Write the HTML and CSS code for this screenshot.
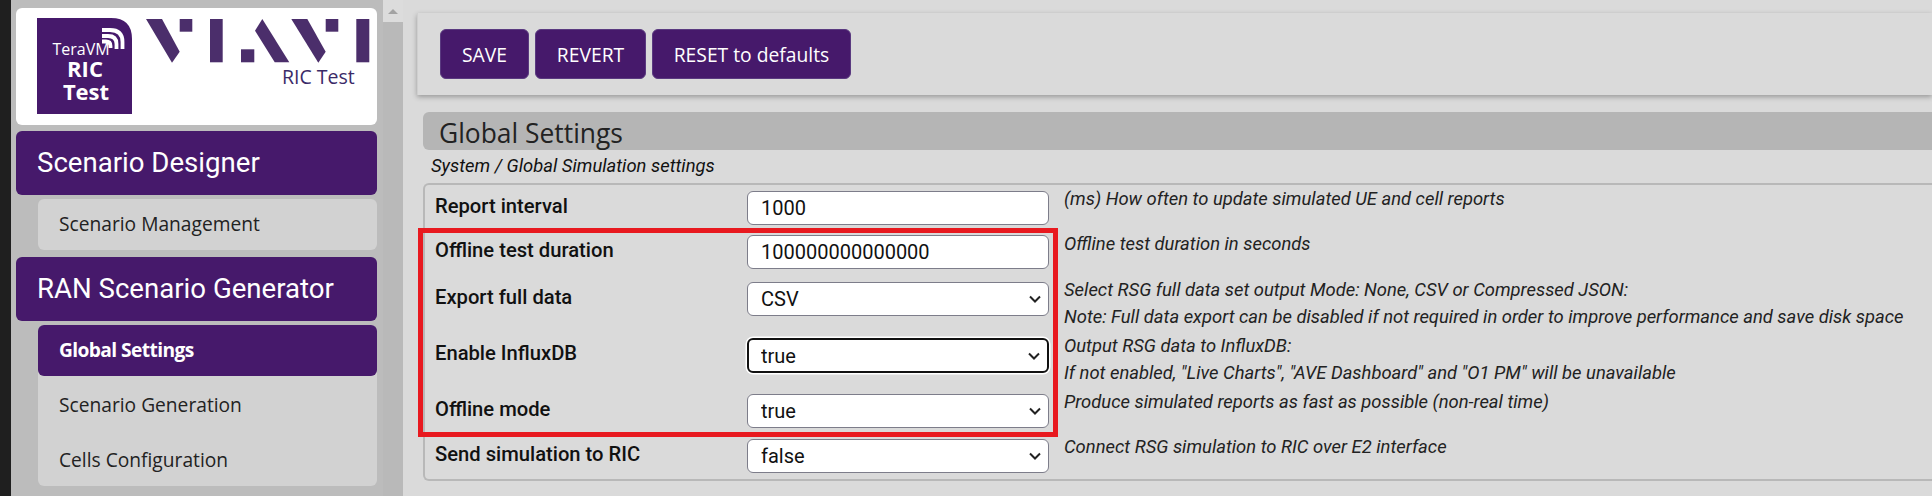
FILE: index.html
```html
<!DOCTYPE html>
<html lang="en">
<head>
  <meta charset="UTF-8">
  <title>Global Settings</title>
  <link rel="stylesheet" href="styles.css">
</head>
<body>

  <div class="edge"></div>

  <aside class="sidebar">
    <div class="logo-card">
      <svg class="logo" viewBox="0 0 361 117" width="361" height="117">
        <path class="logo-square" d="M21 10H95Q116 10 116 31V106H21Z"/>
        <text class="logo-tera" x="65" y="47" text-anchor="middle">TeraVM</text>
        <g class="logo-arcs">
          <path d="M86 22H94Q106.500 22 106.500 34V41"/>
          <path d="M86 28H92Q100.500 28 100.500 36V41"/>
          <path d="M86 33.500H90Q94.500 33.500 94.500 38V40"/>
        </g>
        <text class="logo-ric" x="69" y="69" text-anchor="middle">RIC</text>
        <text class="logo-ric" x="70" y="92" text-anchor="middle">Test</text>
        <g class="logo-viavi">
          <path d="M130 11H146L163.700 43.700L156 54.700Z"/>
          <path d="M163.700 11H176.300V23.700H163.700Z"/>
          <path d="M194 11H206.700V54.300H194Z"/>
          <path d="M225 41.300H238.300V54.300H225Z"/>
          <path d="M246.300 11L239 22.700L258.700 54.300H273.300Z"/>
          <path d="M275.300 11H291.300L309.700 43.700L302.300 54.700Z"/>
          <path d="M309.700 11H322.300V23.700H309.700Z"/>
          <path d="M340.300 11H353.300V54.300H340.300Z"/>
        </g>
        <text class="logo-sub" x="266" y="76">RIC Test</text>
      </svg>
    </div>

    <div class="nav-head">Scenario Designer</div>
    <div class="nav-group nav-group-single">
      <div class="nav-item">Scenario Management</div>
    </div>

    <div class="nav-head">RAN Scenario Generator</div>
    <div class="nav-group">
      <div class="nav-item active">Global Settings</div>
      <div class="nav-item">Scenario Generation</div>
      <div class="nav-item">Cells Configuration</div>
    </div>
  </aside>

  <div class="scrollbar">
    <div class="scroll-up"><span class="scroll-arrow"></span></div>
  </div>

  <main class="main">
    <div class="toolbar">
      <button class="btn btn-save">SAVE</button>
      <button class="btn btn-revert">REVERT</button>
      <button class="btn btn-reset">RESET to defaults</button>
    </div>

    <h2 class="section-title">Global Settings</h2>
    <div class="section-sub">System / Global Simulation settings</div>

    <div class="settings">
      <div class="row">
        <label>Report interval</label>
        <input type="text" value="1000">
        <div class="help">(ms) How often to update simulated UE and cell reports</div>
      </div>
      <div class="row row-tall">
        <label>Offline test duration</label>
        <input type="text" value="100000000000000">
        <div class="help">Offline test duration in seconds</div>
      </div>
      <div class="row">
        <label>Export full data</label>
        <select><option>CSV</option></select>
        <div class="help">Select RSG full data set output Mode: None, CSV or Compressed JSON:<br>Note: Full data export can be disabled if not required in order to improve performance and save disk space</div>
      </div>
      <div class="row">
        <label>Enable InfluxDB</label>
        <select class="focused"><option>true</option></select>
        <div class="help">Output RSG data to InfluxDB:<br>If not enabled, "Live Charts", "AVE Dashboard" and "O1 PM" will be unavailable</div>
      </div>
      <div class="row row-mid">
        <label>Offline mode</label>
        <select><option>true</option></select>
        <div class="help">Produce simulated reports as fast as possible (non-real time)</div>
      </div>
      <div class="row">
        <label>Send simulation to RIC</label>
        <select><option>false</option></select>
        <div class="help">Connect RSG simulation to RIC over E2 interface</div>
      </div>
    </div>

    <div class="callout"></div>
  </main>

</body>
</html>
```

FILE: styles.css
```css
html, body {
  height: 496px;
  margin: 0;
  overflow: hidden;
}

body {
  display: flex;
  background: #dadada;
  font-family: Roboto, sans-serif;
  color: #111;
}

.edge {
  width: 11px;
  flex-shrink: 0;
  background: #1f1f1f;
}

/* sidebar */
.sidebar {
  width: 372px;
  box-sizing: border-box;
  flex-shrink: 0;
  padding: 8px 6px 0 5px;
  background: #bcbcbc;
  overflow: hidden;
}

.logo-card {
  height: 117px;
  background: white;
  border-radius: 6px;
  margin-bottom: 6px;
}

.logo {
  display: block;
}

.logo-square {
  fill: #46196b;
}

.logo-arcs path {
  fill: none;
  stroke: white;
  stroke-width: 3.800;
}

.logo-tera {
  fill: white;
  font: 16px "Open Sans", sans-serif;
}

.logo-ric {
  fill: white;
  font: bold 22px "Open Sans", sans-serif;
}

.logo-viavi path {
  fill: #4b2e6b;
}

.logo-sub {
  fill: #3b2a68;
  font: 19.500px "Open Sans", sans-serif;
}

.nav-head {
  height: 64px;
  padding-left: 21px;
  background: #46196b;
  border-radius: 6px;
  color: white;
  font-size: 27.600px;
  line-height: 64px;
}

.nav-group {
  margin: 4px 0 0 22px;
  background: #d2d2d2;
  border-radius: 6px;
}

.nav-group-single {
  margin-bottom: 7px;
}

.nav-item {
  height: 51px;
  padding-left: 21px;
  border-radius: 6px;
  font: 19.200px/50px "Open Sans", sans-serif;
  color: #222;
}

.nav-item + .nav-item {
  height: 55px;
  line-height: 58px;
}

.nav-item.active {
  background: #46196b;
  color: white;
  font-weight: 700;
  letter-spacing: -0.6px;
}

.scrollbar {
  width: 20px;
  flex-shrink: 0;
  background: #b9b9b9;
}

.scroll-up {
  height: 22px;
  background: #dcdcdc;
  display: flex;
  justify-content: center;
  padding-top: 9px;
  box-sizing: border-box;
}

.scroll-arrow {
  width: 0;
  height: 0;
  border-left: 5px solid transparent;
  border-right: 5px solid transparent;
  border-bottom: 5px solid #a3a3a3;
}

/* main area */
.main {
  position: relative;
  flex: 1;
  min-width: 0;
  padding: 13px 0 0 14px;
}

.toolbar {
  display: flex;
  gap: 6px;
  height: 82px;
  box-sizing: border-box;
  padding: 16px 0 0 22px;
  background: #dadada;
  border-left: 1px solid #cfcfcf;
  box-shadow: 0 2px 5px rgba(0, 0, 0, 0.3);
  margin-bottom: 17px;
}

.btn {
  height: 50px;
  padding: 0;
  background: #46196b;
  border: 1px solid #5a3a80;
  border-radius: 6px;
  color: white;
  font: 19.300px "Open Sans", sans-serif;
}

.btn-save {
  width: 89px;
}

.btn-revert {
  width: 111px;
}

.btn-reset {
  width: 199px;
}

.section-title {
  height: 38px;
  margin: 0 0 0 6px;
  padding-left: 16px;
  background: #b5b5b5;
  border-radius: 6px 0 0 6px;
  font: 400 26.400px/42px "Open Sans", sans-serif;
  color: #222;
}

.section-sub {
  height: 33px;
  margin-left: 14px;
  font-size: 18.400px;
  font-style: italic;
  line-height: 31px;
}

.settings {
  height: 298px;
  box-sizing: border-box;
  margin-left: 6px;
  padding: 1px 0 0 10px;
  border: 1px solid #b8b8b8;
  border-width: 2px 0 2px 2px;
  border-radius: 6px 0 0 6px;
}

.row {
  display: grid;
  grid-template-columns: 297px 302px 1fr;
  column-gap: 15px;
  min-height: 44px;
}

.row-tall {
  min-height: 47px;
}

.row-mid {
  min-height: 45px;
}

.row label {
  font-size: 20.200px;
  font-weight: 500;
  line-height: 40px;
}

input, select {
  width: 302px;
  height: 34px;
  box-sizing: border-box;
  margin-top: 5px;
  padding: 0 13px;
  background: white;
  border: 1px solid #7d7d8a;
  border-radius: 6px;
  font: 20px Roboto, sans-serif;
  color: #111;
}

select {
  appearance: none;
  background: white url("data:image/svg+xml,%3Csvg xmlns='http://www.w3.org/2000/svg' width='12' height='8'%3E%3Cpath d='M1 1.500L6 6.500L11 1.500' fill='none' stroke='%23222' stroke-width='2'/%3E%3C/svg%3E") no-repeat right 7px center;
}

select.focused {
  height: 35px;
  border: 2px solid #111;
  padding-left: 12px;
  box-shadow: 0 0 0 1.500px white;
}

.help {
  padding-bottom: 3px;
  font-size: 18.400px;
  font-style: italic;
  line-height: 26.500px;
  color: #222;
  white-space: nowrap;
}

.row-tall .help {
  padding-top: 1px;
}

/* red box drawn over the screenshot */
.callout {
  position: absolute;
  left: 15px;
  top: 228px;
  width: 630px;
  height: 199px;
  border: 5px solid #e8191f;
}
```
